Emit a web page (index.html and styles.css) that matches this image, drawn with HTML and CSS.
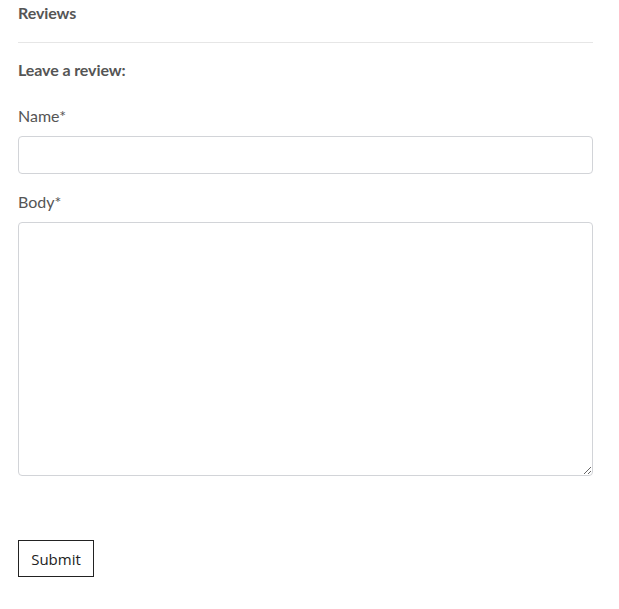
FILE: index.html
```html
<!DOCTYPE html>
<html>
<head>
<meta charset="utf-8">
<link rel="stylesheet" href="styles.css">
</head>
<body>
<section class="reviews">
  <h3 class="reviews-title">Reviews</h3>
  <hr class="divider">
  <form class="review-form">
    <h4 class="form-title">Leave a review:</h4>
    <label class="field-label" for="name">Name*</label>
    <input class="text-input" id="name" type="text">
    <label class="field-label body-label" for="body">Body*</label>
    <textarea class="text-area" id="body"></textarea>
    <button class="submit-btn" type="button">Submit</button>
  </form>
</section>
</body>
</html>
```
FILE: styles.css
```css
html, body {
  margin: 0;
  padding: 0;
  background: #fff;
}
.reviews {
  width: 575px;
  padding: 3px 0 0 18px;
  font-family: Lato, "Open Sans", sans-serif;
  color: #555;
}
.reviews-title {
  margin: 0;
  font-size: 16px;
  font-weight: 700;
  line-height: 19px;
  letter-spacing: -0.1px;
}
.divider {
  margin: 20px 0 0 0;
  border: 0;
  border-top: 1px solid #e6e6e6;
  height: 0;
}
.review-form {
  display: flex;
  flex-direction: column;
  align-items: flex-start;
}
.form-title {
  margin: 17px 0 0 0;
  font-size: 16px;
  font-weight: 700;
  line-height: 19px;
  letter-spacing: -0.1px;
}
.field-label {
  margin-top: 27px;
  font-size: 16px;
  line-height: 19px;
}
.body-label {
  margin-top: 18px;
}
.text-input {
  box-sizing: border-box;
  margin-top: 11px;
  width: 575px;
  height: 38px;
  border: 1px solid #d2d4d8;
  border-radius: 4px;
  padding: 6px 10px;
  font-family: Lato, sans-serif;
  font-size: 16px;
  background: #fff;
}
.text-area {
  box-sizing: border-box;
  margin-top: 11px;
  width: 575px;
  height: 254px;
  border: 1px solid #d2d4d8;
  border-radius: 4px;
  padding: 6px 10px;
  font-family: Lato, sans-serif;
  font-size: 16px;
  resize: both;
  background: #fff;
}
.submit-btn {
  box-sizing: border-box;
  margin-top: 64px;
  width: 76px;
  height: 37px;
  border: 1px solid #222;
  border-radius: 0;
  background: #fff;
  color: #222;
  font-family: "Open Sans", "DejaVu Sans", sans-serif;
  font-size: 15px;
  padding: 0;
}
```
